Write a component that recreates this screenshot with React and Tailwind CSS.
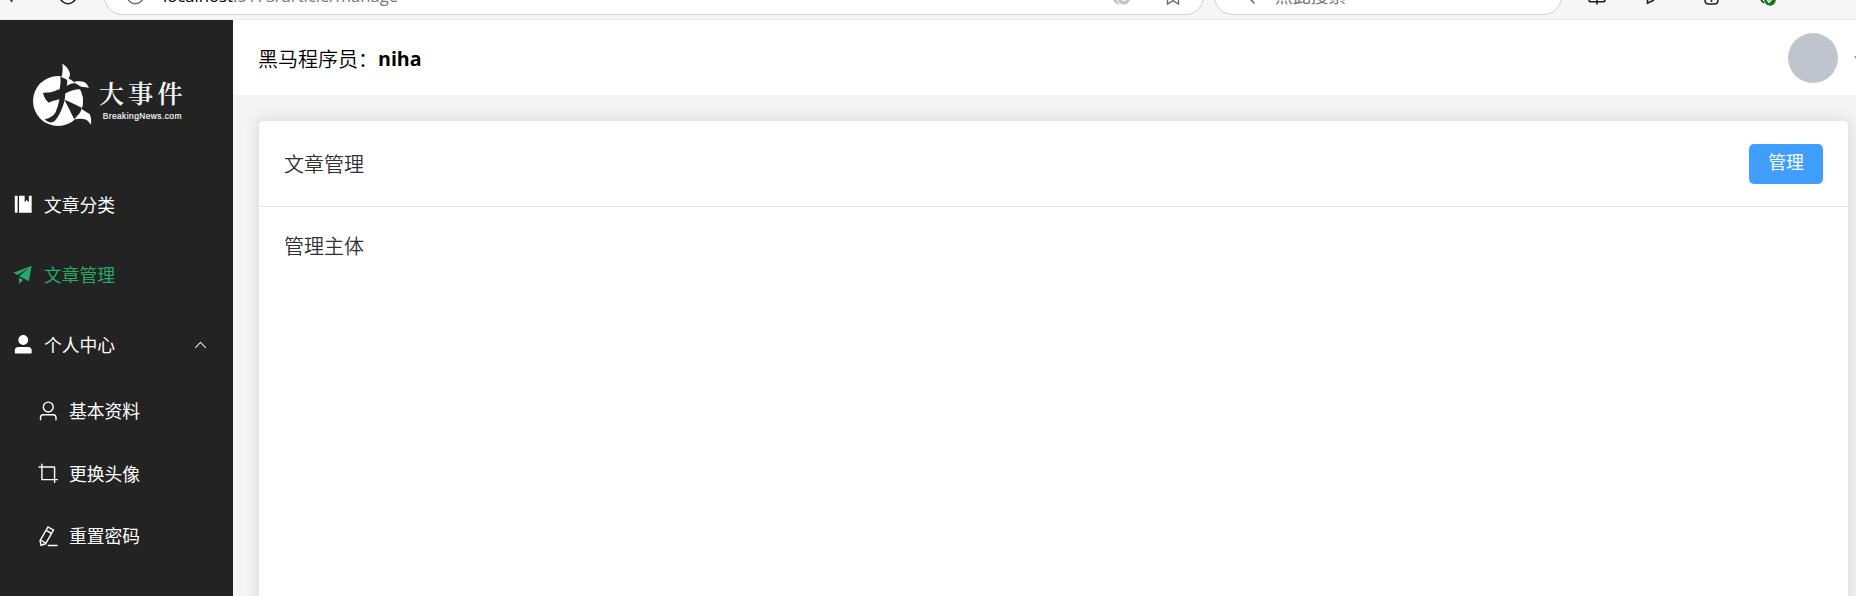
import React from 'react';

const PATHS = {
  management: ['M576 128v288l96-96 96 96V128h128v768H320V128zm-448 0h128v768H128z'],
  promotion: ['m64 448 832-320-128 704-446.08-243.328L832 192 242.816 545.472zm256 512V657.024L512 768z'],
  userFilled: [
    'M288 320a224 224 0 1 0 448 0 224 224 0 1 0-448 0m544 608H160a32 32 0 0 1-32-32v-96a160 160 0 0 1 160-160h448a160 160 0 0 1 160 160v96a32 32 0 0 1-32 32z',
  ],
  user: [
    'M512 512a192 192 0 1 0 0-384 192 192 0 0 0 0 384m0 64a256 256 0 1 1 0-512 256 256 0 0 1 0 512m320 320v-96a96 96 0 0 0-96-96H288a96 96 0 0 0-96 96v96a32 32 0 1 1-64 0v-96a160 160 0 0 1 160-160h448a160 160 0 0 1 160 160v96a32 32 0 1 1-64 0',
  ],
  crop: [
    'M256 768h672a32 32 0 1 1 0 64H224a32 32 0 0 1-32-32V96a32 32 0 0 1 64 0z',
    'M832 224v704a32 32 0 1 1-64 0V256H96a32 32 0 0 1 0-64h704a32 32 0 0 1 32 32',
  ],
  editPen: [
    'm199.04 672.64 193.984 112 224-387.968-193.92-112-224 388.032zm-23.872 60.16 32.896 148.288 144.896-45.696zM455.04 229.248l193.92 112 56.704-98.112-193.984-112zM104.32 708.8l384-665.024 304.768 175.936L409.152 884.8h.064l-248.448 78.336zm384 254.272v-64h448v64z',
  ],
  arrowUp: [
    'm488.832 344.32-339.84 356.672a32 32 0 0 0 0 44.16l.384.384a29.44 29.44 0 0 0 42.688 0l320-335.872 319.872 335.872a29.44 29.44 0 0 0 42.688 0l.384-.384a32 32 0 0 0 0-44.16L535.168 344.32a32 32 0 0 0-46.336 0',
  ],
};

function Icon({ name, className }) {
  return (
    <svg viewBox="0 0 1024 1024" fill="currentColor" className={className}>
      {PATHS[name].map((d) => (
        <path key={d} d={d} />
      ))}
    </svg>
  );
}

function BrowserBar() {
  return (
    <div className="flex h-5 w-full shrink-0 items-start overflow-hidden border-b border-[#ebebeb] bg-[#f6f6f6]">
      <svg className="h-5 w-[104px] shrink-0" viewBox="0 0 104 20" fill="none" stroke="#222" strokeWidth="1.6">
        <path d="M7 -4 12.5 1.8" />
        <circle cx="68" cy="-4.5" r="8.2" />
      </svg>
      <div className="-mt-[22px] flex h-[37px] w-[1100px] shrink-0 items-start rounded-full border border-[#cfcfcf] bg-white">
        <svg className="mt-[21px] h-3 w-[58px] shrink-0" viewBox="0 0 58 12" fill="none" stroke="#6b6b6b" strokeWidth="1.4">
          <circle cx="30.3" cy="-4.5" r="8.2" />
        </svg>
        <div className="mt-[5px] flex-1 whitespace-nowrap font-['Open_Sans','Noto_Sans',sans-serif] text-[16.7px] leading-[24px] text-[#767676]">
          <span className="font-medium text-black">localhost</span>:5173/article/manage
        </div>
        <svg className="mt-[21px] h-3 w-[90px] shrink-0" viewBox="0 0 90 12">
          <path d="M0 0q2 4 7 4.500Q4.500 2.500 4 0zM5 0q1.500 4.500 6 4.500 4.500-.5 6-4.500h-3q-2 1.500-4 1T9 0z" fill="#c4c4c4" />
          <path d="M54.500 0v4l5.500-3.400L65.500 4V0" fill="none" stroke="#6b6b6b" strokeWidth="1.4" />
        </svg>
      </div>
      <div className="-mt-[22px] ml-[10px] flex h-[37px] w-[348px] shrink-0 items-start rounded-full border border-[#cfcfcf] bg-white">
        <svg className="mt-[21px] h-3 w-[60px] shrink-0" viewBox="0 0 60 12" fill="none" stroke="#6b6b6b" strokeWidth="1.5">
          <path d="M35 -1 39.5 3.5" />
        </svg>
        <div className="mt-[4px] whitespace-nowrap font-['Noto_Sans_CJK_SC',sans-serif] text-[17.8px] leading-[24px] text-[#767676]">点此搜索</div>
      </div>
      <svg className="h-5 flex-1" viewBox="0 0 294 20" fill="none" stroke="#222" strokeWidth="1.6">
        <path d="M27 0q0 1.800 2 1.800h12q2 0 2-1.800M35 0v4.500" />
        <path d="M85.500 0v3.200L92 0" />
        <path d="M143 0q0 4 3.500 4h6q3.500 0 3.500-4M149.500 0v2" />
        <path d="M199 0 202 3" />
        <circle cx="208" cy="0" r="5.800" fill="#107c10" stroke="none" />
        <path d="M205.200 0 207 2 211 -2" stroke="#fff" />
      </svg>
    </div>
  );
}

function Logo() {
  return (
    <div className="flex h-[149px] w-full shrink-0 items-start pl-5 pt-[30px]">
      <svg className="h-[90px] w-[180px] shrink-0" viewBox="0 0 540 270">
        <circle cx="114" cy="153" r="75" fill="#fff" />
        <g fill="#fff">
          <path d="M127 41c13 8 23 21 23 33-1 10-8 16-12 26l-14-17c4-14 5-28 3-42z" />
          <path d="M164 95c15-3 29-1 36 6l7 13c-15-5-28-1-41-7z" />
          <path d="M180 172c8 9 19 14 29 20 5 11 6 22 3 32-5-9-12-16-22-17-10-2-18-1-24 1 8-9 14-22 14-36z" />
        </g>
        <g fill="#232323">
          <path d="M121 78c8 8 20 8 21 15 0 13-5 24-6 37-1 14-2 26-7 37-8 22-18 39-25 46-9 7-21 5-30-5 13-3 25-9 32-20 6-13 10-27 12-40-13 3-23 5-31 10-7-4-14-14-18-29 7-1 14-1 24-2 10-3 17-7 26-9 2-13 4-25 2-40z" />
          <path d="M134 112c10-7 19-13 32-12l20 12-6 6c-16 0-31 6-47 13z" />
          <path d="M133 149c10 18 20 39 30 59l10-12c7-7 11-14 12-23-18-9-34-18-52-24z" />
        </g>
        <path d="M140 149 186 172c3-11 4-22 1-34z" fill="#fff" />
        <text x="236" y="160" fontFamily="'Noto Serif CJK SC','Noto Sans CJK SC',serif" fontSize="76" fontWeight="600" letterSpacing="12" fill="#f4f4f4">
          大事件
        </text>
        <text x="248" y="206" fontFamily="'Liberation Sans',sans-serif" fontSize="25" textLength="236" fill="#f4f4f4" stroke="#f4f4f4" strokeWidth="0.6">
          BreakingNews.com
        </text>
      </svg>
    </div>
  );
}

function MenuItem({ icon, label, active, sub, open }) {
  return (
    <div
      className={`flex w-full shrink-0 items-center pr-[25px] ${sub ? 'h-[62.5px] pl-[33px]' : 'h-[70px] pl-2'} ${
        active ? 'text-[#27a768]' : 'text-white'
      }`}
    >
      <div className="flex w-[30px] shrink-0 justify-center pt-px">
        <Icon name={icon} className="h-[22.5px] w-[22.5px]" />
      </div>
      <span className="ml-[6px] flex-1 text-[17.8px] leading-6">{label}</span>
      {open && <Icon name="arrowUp" className="h-[15px] w-[15px]" />}
    </div>
  );
}

function Sidebar() {
  return (
    <aside className="flex w-[233px] shrink-0 flex-col bg-[#232323]">
      <Logo />
      <nav className="flex flex-col">
        <MenuItem icon="management" label="文章分类" />
        <MenuItem icon="promotion" label="文章管理" active />
        <MenuItem icon="userFilled" label="个人中心" open />
        <MenuItem icon="user" label="基本资料" sub />
        <MenuItem icon="crop" label="更换头像" sub />
        <MenuItem icon="editPen" label="重置密码" sub />
      </nav>
    </aside>
  );
}

export default function App() {
  return (
    <div className="flex h-[596px] w-[1856px] flex-col overflow-hidden bg-[#f4f4f4] font-['Noto_Sans_CJK_SC',sans-serif]">
      <BrowserBar />
      <div className="flex min-h-0 flex-1">
        <Sidebar />
        <div className="flex min-w-0 flex-1 flex-col">
          <header className="flex h-[75px] shrink-0 items-center bg-white pl-[25px] text-black">
            <div className="flex flex-1 items-center pt-[2px] text-[20px] font-[350] leading-7">
              黑马程序员：
              <strong className="font-['Open_Sans','Noto_Sans',sans-serif] text-[19.6px] font-bold">niha</strong>
            </div>
            <div className="h-[50px] w-[50px] rounded-full bg-[#c0c4cc]" />
            <svg className="ml-4 h-[18px] w-[2px]" viewBox="0 0 2 18" fill="#999">
              <path d="M0 7h2v3z" />
            </svg>
          </header>
          <main className="flex min-h-0 flex-1 flex-col pl-[25px] pr-[7px] pt-[25px]">
            <section className="flex h-[600px] shrink-0 flex-col rounded-[5px] border border-[#e4e7ed] bg-white text-[20px] font-[350] text-[#303133] shadow-[0_0_15px_rgba(0,0,0,0.12)]">
              <div className="flex h-[86px] shrink-0 items-center justify-between border-b border-[#e4e7ed] px-[25px]">
                <span className="pt-px leading-7">文章管理</span>
                <button className="flex h-10 w-[74px] items-center justify-center rounded-[5px] bg-[#409eff] pb-[4px] text-[17.8px] font-normal text-white">
                  管理
                </button>
              </div>
              <div className="px-[25px] py-[25px] leading-7">管理主体</div>
            </section>
          </main>
        </div>
      </div>
    </div>
  );
}
